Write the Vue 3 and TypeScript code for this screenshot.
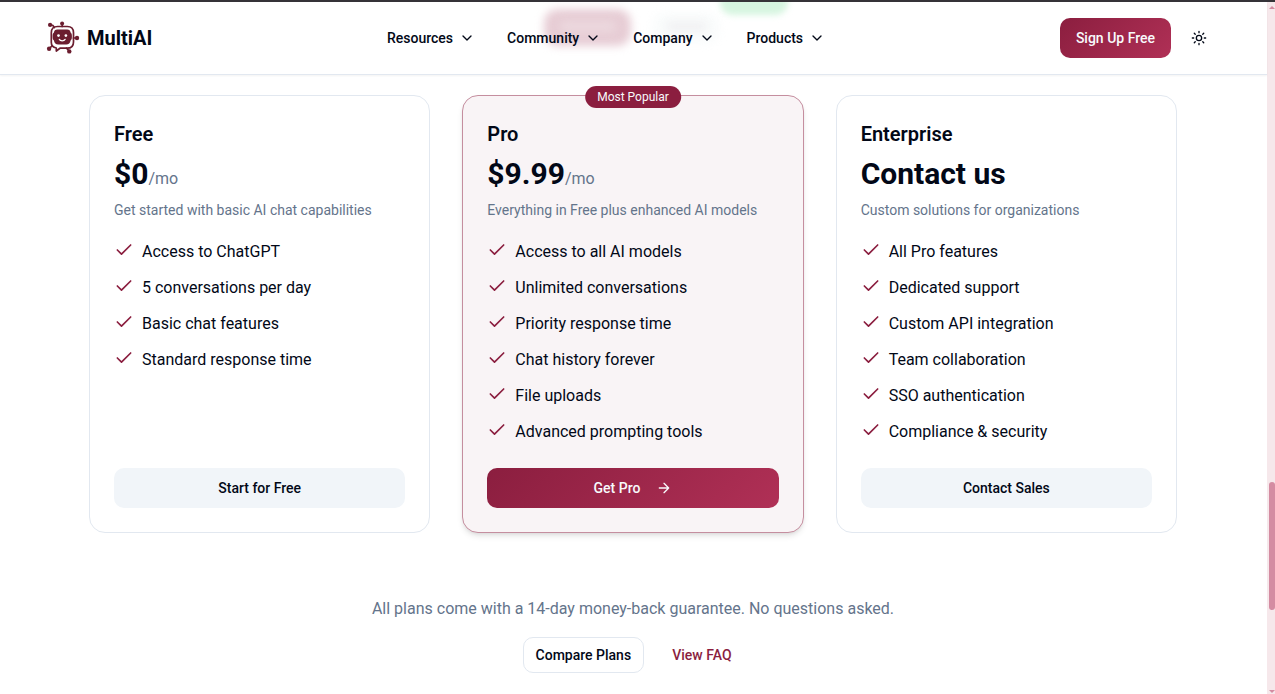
<script setup lang="ts">
interface Plan {
  name: string
  price: string
  period?: string
  description: string
  features: string[]
  action: string
  popular?: boolean
}

const menus: string[] = ['Resources', 'Community', 'Company', 'Products']

const plans: Plan[] = [
  {
    name: 'Free',
    price: '$0',
    period: '/mo',
    description: 'Get started with basic AI chat capabilities',
    features: ['Access to ChatGPT', '5 conversations per day', 'Basic chat features', 'Standard response time'],
    action: 'Start for Free',
  },
  {
    name: 'Pro',
    price: '$9.99',
    period: '/mo',
    description: 'Everything in Free plus enhanced AI models',
    features: [
      'Access to all AI models',
      'Unlimited conversations',
      'Priority response time',
      'Chat history forever',
      'File uploads',
      'Advanced prompting tools',
    ],
    action: 'Get Pro',
    popular: true,
  },
  {
    name: 'Enterprise',
    price: 'Contact us',
    description: 'Custom solutions for organizations',
    features: [
      'All Pro features',
      'Dedicated support',
      'Custom API integration',
      'Team collaboration',
      'SSO authentication',
      'Compliance & security',
    ],
    action: 'Contact Sales',
  },
]
</script>

<template>
  <div class="window">
    <div class="page">
      <header class="header">
        <div class="behind" aria-hidden="true">
          <span class="glow glow-toggle"></span>
          <span class="glow glow-label"></span>
          <span class="glow glow-option"></span>
          <span class="glow glow-option-label"></span>
          <span class="glow glow-save"></span>
        </div>
        <a class="brand">
          <svg class="logo" viewBox="0 0 34 34" width="34" height="34">
            <g fill="none" stroke="#6b1d2f" stroke-width="1.7" stroke-linecap="round" stroke-linejoin="round">
              <path d="M14 28.200 10.300 31v-3C7 27.300 5.300 25.500 5.300 22.500V12.800C5.300 8.800 7.500 6.500 11.500 6.500h9.800c4 0 6.200 2.300 6.200 6.300v9.100c0 4-2.200 6.300-6.200 6.300z" />
              <path d="M4.200 4.800l2.900.8 1.300 2M16.200 3.500v3M27.500 18h4M5.800 26 3.600 28.300M20.500 28.200l2.600 2.800" />
            </g>
            <g fill="#6b1d2f">
              <circle cx="4.100" cy="4.900" r="2.150" />
              <circle cx="16.100" cy="3.500" r="2" />
              <circle cx="31" cy="18" r="2.200" />
              <circle cx="3.100" cy="28.700" r="2.200" />
              <circle cx="23.300" cy="31.400" r="2.200" />
              <path d="M11.300 9.500h9.900c2 0 3.100 1.200 3.400 3 1.100.8 1.300 1.800 1.300 4s-.2 3.200-1.300 4c-.5 2.500-1.900 3.900-4.400 3.900h-7.900c-2.500 0-3.900-1.400-4.400-3.900-1.100-.8-1.300-1.800-1.300-4s.2-3.200 1.300-4c.3-1.800 1.400-3 3.400-3z" />
            </g>
            <circle cx="12.500" cy="15.600" r="1.350" fill="#fff" />
            <circle cx="19.900" cy="15.600" r="1.350" fill="#fff" />
            <path d="M13.300 19.400c1 1.900 4.800 1.900 5.800 0" fill="none" stroke="#fff" stroke-width="1.200" stroke-linecap="round" />
          </svg>
          <span class="brand-name">MultiAI</span>
        </a>
        <nav class="menu">
          <a v-for="item in menus" :key="item" class="menu-item">
            <span>{{ item }}</span>
            <svg class="icon" viewBox="0 0 24 24" width="16" height="16"><path d="m6 9 6 6 6-6" /></svg>
          </a>
        </nav>
        <div class="actions">
          <button class="btn btn-primary signup">Sign Up Free</button>
          <button class="theme" aria-label="Theme">
            <svg class="icon" viewBox="0 0 24 24" width="16" height="16">
              <circle cx="12" cy="12" r="4" />
              <path d="M12 2v2M12 20v2M4.930 4.930l1.410 1.410M17.660 17.660l1.410 1.410M2 12h2M20 12h2M6.340 17.660l-1.410 1.410M19.070 4.930l-1.410 1.410" />
            </svg>
          </button>
        </div>
      </header>

      <main>
        <section class="plans">
          <article v-for="plan in plans" :key="plan.name" class="card" :class="{ popular: plan.popular }">
            <span v-if="plan.popular" class="badge">Most Popular</span>
            <h3>{{ plan.name }}</h3>
            <p class="price"><strong>{{ plan.price }}</strong><span v-if="plan.period">{{ plan.period }}</span></p>
            <p class="description">{{ plan.description }}</p>
            <ul>
              <li v-for="feature in plan.features" :key="feature">
                <svg class="icon check" viewBox="0 0 24 24" width="20" height="20"><path d="M20 6 9 17l-5-5" /></svg>
                <span>{{ feature }}</span>
              </li>
            </ul>
            <button class="btn card-action" :class="plan.popular ? 'btn-primary' : 'btn-soft'">
              <span>{{ plan.action }}</span>
              <svg v-if="plan.popular" class="icon" viewBox="0 0 24 24" width="16" height="16"><path d="M5 12h14M12 5l7 7-7 7" /></svg>
            </button>
          </article>
        </section>
        <section class="closing">
          <p>All plans come with a 14-day money-back guarantee. No questions asked.</p>
          <div class="links">
            <button class="btn btn-outline">Compare Plans</button>
            <button class="btn btn-link">View FAQ</button>
          </div>
        </section>
      </main>
    </div>

    <div class="scrollbar" aria-hidden="true">
      <svg class="arrow" viewBox="0 0 6 3" width="6" height="3"><path d="M0 3 3 0l3 3z" /></svg>
      <span class="thumb"></span>
      <svg class="arrow arrow-down" viewBox="0 0 6 3" width="6" height="3"><path d="M0 0l3 3 3-3z" /></svg>
    </div>
  </div>
</template>

<style>
body {
  background: #fff;
}
</style>

<style scoped>
* {
  box-sizing: border-box;
}

.window {
  display: flex;
  height: 694px;
  overflow: hidden;
  border-top: 2px solid #353338;
  background: #fff;
  color: #020817;
  font-family: Roboto, "Liberation Sans", sans-serif;
  font-size: 16px;
  line-height: 24px;
}

.page {
  flex: 1;
  min-width: 0;
}

main {
  width: 1266px;
}

h3,
p,
ul {
  margin: 0;
  padding: 0;
}

.icon {
  flex: none;
  fill: none;
  stroke: currentColor;
  stroke-width: 2;
  stroke-linecap: round;
  stroke-linejoin: round;
}

.header {
  position: relative;
  display: grid;
  grid-template-columns: 341px 1fr auto;
  align-items: center;
  height: 73px;
  padding: 0 48px 0 46px;
  border-bottom: 1px solid #e2e8f0;
  box-shadow: 0 1px 2px rgba(0, 0, 0, 0.05);
}

.behind {
  position: absolute;
  inset: 0;
  overflow: hidden;
}

.glow {
  position: absolute;
  border-radius: 14px;
  filter: blur(4px);
}

.glow-toggle {
  left: 544px;
  top: 7px;
  width: 87px;
  height: 37px;
  background: #e7cdd5;
}

.glow-label {
  left: 560px;
  top: 19px;
  width: 56px;
  height: 11px;
  background: #ecd8de;
}

.glow-option {
  left: 652px;
  top: 10px;
  width: 68px;
  height: 32px;
  background: #fafcfc;
}

.glow-option-label {
  left: 666px;
  top: 20px;
  width: 41px;
  height: 9px;
  background: #f0f0f2;
}

.glow-save {
  left: 720px;
  top: -12px;
  width: 68px;
  height: 25px;
  background: #d6f5e0;
  filter: blur(3px);
}

.brand,
.menu,
.actions {
  position: relative;
  display: flex;
  align-items: center;
}

.brand {
  gap: 7px;
}

.logo {
  margin-bottom: 2px;
}

.brand-name {
  font-size: 20px;
  font-weight: 700;
  line-height: 28px;
}

.menu {
  gap: 32px;
  font-size: 14px;
  font-weight: 500;
  line-height: 20px;
}

.menu-item {
  display: flex;
  align-items: center;
  gap: 6px;
}

.actions {
  gap: 8px;
}

.btn {
  display: flex;
  align-items: center;
  justify-content: center;
  height: 40px;
  padding: 0 16px;
  border: 0;
  border-radius: 10px;
  font: 500 14px/20px Roboto, "Liberation Sans", sans-serif;
  color: #020817;
  white-space: nowrap;
}

.btn-primary {
  background: linear-gradient(135deg, #8b1e3f, #b03056);
  color: #f8fafc;
}

.btn-soft {
  background: #f1f5f9;
}

.theme {
  display: flex;
  align-items: center;
  justify-content: center;
  width: 40px;
  height: 40px;
  padding: 0;
  border: 0;
  background: none;
  color: #020817;
}

.plans {
  display: grid;
  grid-template-columns: repeat(3, 1fr);
  gap: 32px;
  width: 1088px;
  margin: 20px auto 0;
}

.card {
  position: relative;
  display: flex;
  flex-direction: column;
  height: 438px;
  padding: 24px;
  border: 1px solid #e2e8f0;
  border-radius: 16px;
}

.popular {
  border-color: #c58e9f;
  background: #f9f4f6;
  box-shadow: 0 4px 6px -1px rgba(0, 0, 0, 0.1), 0 2px 4px -2px rgba(0, 0, 0, 0.1);
}

.badge {
  position: absolute;
  top: -10px;
  left: 50%;
  transform: translateX(-50%);
  padding: 3px 12px;
  border-radius: 11px;
  background: #8b1e3f;
  color: #f8fafc;
  font-size: 12px;
  line-height: 16px;
  white-space: nowrap;
}

h3 {
  font-size: 20px;
  font-weight: 600;
  line-height: 28px;
}

.price {
  height: 36px;
  margin-top: 8px;
  line-height: 36px;
  color: #64748b;
}

.price strong {
  font-size: 30px;
  font-weight: 700;
  color: #020817;
}

.description {
  margin-top: 8px;
  font-size: 14px;
  line-height: 20px;
  color: #64748b;
}

ul {
  display: flex;
  flex-direction: column;
  gap: 12px;
  margin-top: 20px;
  list-style: none;
}

li {
  display: flex;
  align-items: flex-start;
  gap: 8px;
}

.check {
  color: #8b1e3f;
}

.card-action {
  gap: 16px;
  margin-top: auto;
}

.closing {
  display: flex;
  flex-direction: column;
  align-items: center;
  gap: 16px;
  margin-top: 64px;
  color: #64748b;
}

.links {
  display: flex;
  gap: 16px;
}

.btn-outline,
.btn-link {
  height: 36px;
  padding: 0 12px;
}

.btn-outline {
  min-width: 121px;
  padding: 0 11.500px;
  border: 1px solid #e2e8f0;
  background: #fff;
}

.btn-link {
  padding: 0 11.600px 0 12.400px;
  background: none;
  color: #8b1e3f;
}

.scrollbar {
  display: flex;
  flex-direction: column;
  align-items: flex-end;
  width: 8px;
  padding: 4px 0 1px;
  background: #f6e8eb;
}

.arrow {
  fill: #d48ca2;
}

.thumb {
  width: 6px;
  height: 128px;
  margin-top: 473px;
  border-radius: 3px;
  background: #d48ca2;
}

.arrow-down {
  margin-top: auto;
}
</style>
